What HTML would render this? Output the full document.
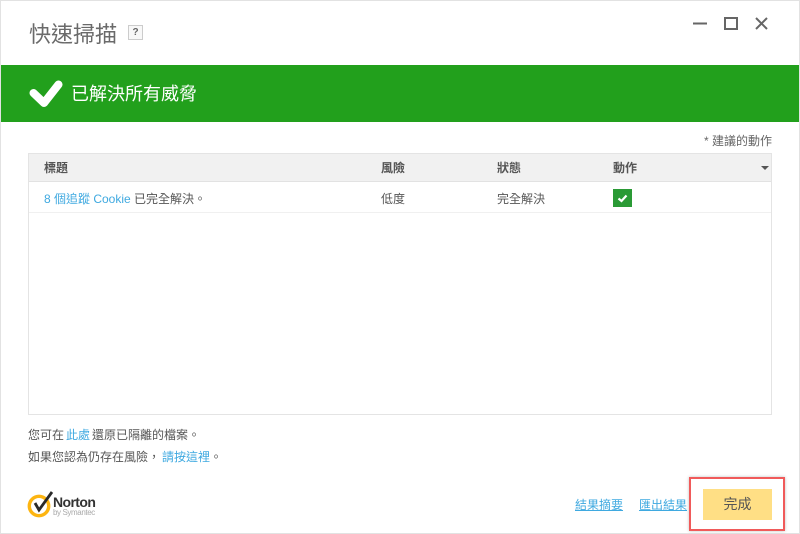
<!DOCTYPE html>
<html><head><meta charset="utf-8">
<style>
html,body{margin:0;padding:0;background:#fff}
body{width:800px;height:534px;position:relative;overflow:hidden;font-family:"Liberation Sans","Noto Sans CJK TC",sans-serif;color:#555}
.a{position:absolute;white-space:nowrap}
.l{color:#3fa9e0}
.t{font-size:12px;line-height:16px}
.h{font-size:12px;line-height:16px;font-weight:bold;color:#555}
</style></head><body>
<div class="a" style="left:0;top:0;width:800px;height:534px;border:1px solid #e2e2e2;box-sizing:border-box"></div>
<div class="a" style="left:29px;top:20px;font-size:22px;line-height:30px;color:#6a6a6a">快速掃描</div>
<div class="a" style="left:128px;top:25px;width:13px;height:13px;border:1px solid #ccc;font-size:10px;line-height:13px;text-align:center;color:#666;background:#f8f8f8;font-weight:bold">?</div>
<svg class="a" style="left:690px;top:14px" width="90" height="20" viewBox="0 0 90 20" fill="none" stroke="#666">
<path d="M3 9.5H17" stroke-width="2"/>
<rect x="35" y="4" width="12" height="11" stroke-width="2"/>
<path d="M66 4L77 15M77 4L66 15" stroke-width="2"/>
</svg>
<div class="a" style="left:1px;top:65px;width:798px;height:57px;background:#22a01c"></div>
<svg class="a" style="left:27px;top:79px" width="38" height="30" viewBox="0 0 38 30"><path d="M6.5 14L17 24L31.5 5.5" fill="none" stroke="#fff" stroke-width="8" stroke-linecap="round" stroke-linejoin="round"/></svg>
<div class="a" style="left:71px;top:81px;font-size:18px;line-height:26px;color:#fff">已解決所有威脅</div>
<div class="a t" style="right:28px;top:133px;color:#666">* 建議的動作</div>
<div class="a" style="left:28px;top:153px;width:742px;height:260px;border:1px solid #e4e4e4"></div>
<div class="a" style="left:29px;top:154px;width:742px;height:27px;background:#f1f1f1;border-bottom:1px solid #e2e2e2"></div>
<div class="a" style="left:29px;top:212px;width:742px;height:1px;background:#f0f0f0"></div>
<div class="a h" style="left:44px;top:160px">標題</div>
<div class="a h" style="left:381px;top:160px">風險</div>
<div class="a h" style="left:497px;top:160px">狀態</div>
<div class="a h" style="left:613px;top:160px">動作</div>
<div class="a" style="left:761px;top:166px;width:0;height:0;border:4px solid transparent;border-top:4px solid #555;border-bottom:0"></div>
<div class="a t" style="left:44px;top:191px"><span class="l">8 個追蹤 Cookie</span> 已完全解決。</div>
<div class="a t" style="left:381px;top:191px">低度</div>
<div class="a t" style="left:497px;top:191px">完全解決</div>
<div class="a" style="left:613px;top:189px;width:19px;height:18px;background:#2a9a35"></div>
<svg class="a" style="left:613px;top:189px" width="19" height="18" viewBox="0 0 19 18"><path d="M5.5 9.5L8.5 12L13.5 6.5" fill="none" stroke="#fff" stroke-width="2.2"/></svg>
<div class="a t" style="left:28px;top:427px">您可在<span class="l" style="margin:0 2px">此處</span>還原已隔離的檔案。</div>
<div class="a t" style="left:28px;top:449px">如果您認為仍存在風險，<span class="l" style="margin-left:2px">請按這裡</span>。</div>
<svg class="a" style="left:27px;top:490px" width="28" height="28" viewBox="0 0 28 28">
<circle cx="12" cy="16" r="9.7" fill="none" stroke="#fdb511" stroke-width="3.4"/>
<path d="M8 13L12 20L25 2" fill="none" stroke="#2a2a2a" stroke-width="2.8"/>
</svg>
<div class="a" style="left:53px;top:494px;font-size:14px;line-height:16px;font-weight:bold;color:#333;letter-spacing:-.6px">Norton</div>
<div class="a" style="left:53px;top:508px;font-size:8px;line-height:9px;color:#aaa;letter-spacing:-.4px">by Symantec</div>
<div class="a t l" style="left:575px;top:497px;text-decoration:underline">結果摘要</div>
<div class="a t l" style="left:639px;top:497px;text-decoration:underline">匯出結果</div>
<div class="a" style="left:689px;top:477px;width:92px;height:50px;border:2px solid #f05a5a;box-shadow:0 0 3px rgba(0,0,0,.25);box-sizing:content-box"></div>
<div class="a" style="left:703px;top:489px;width:69px;height:31px;background:#ffdf85;text-align:center;font-size:14px;line-height:31px;color:#555">完成</div>
</body></html>
